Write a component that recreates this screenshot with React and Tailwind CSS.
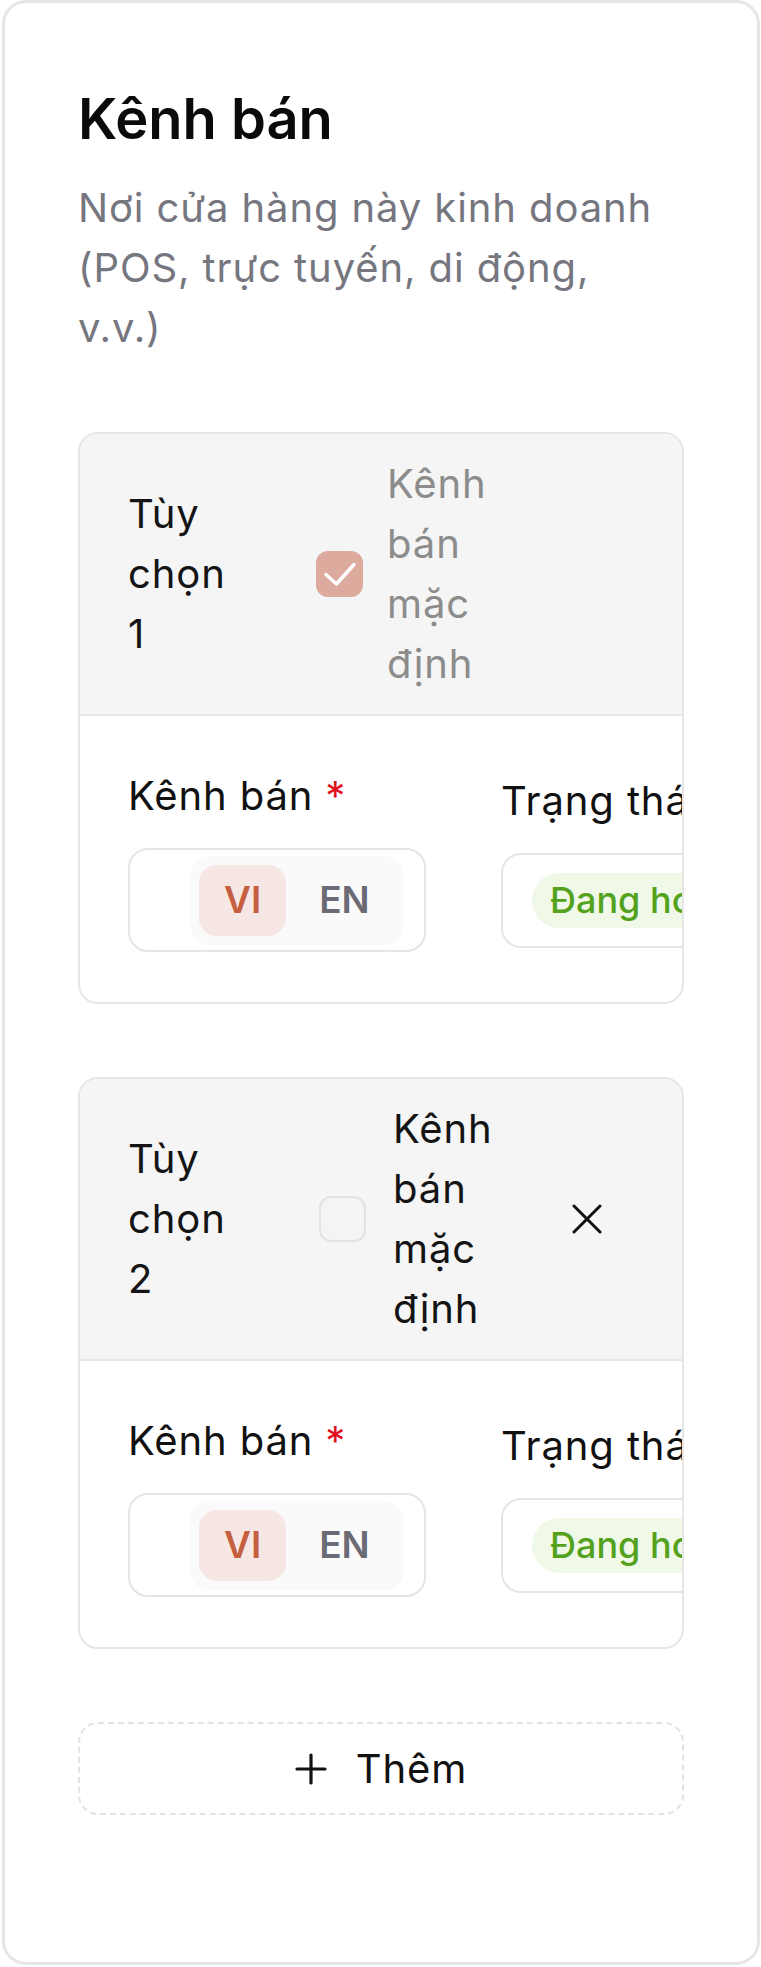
import { useState } from 'react';

const options = [
  { id: 1, isDefault: true, colW: 'w-[188px]', labelGap: 'ml-[24px]', removable: false },
  { id: 2, isDefault: false, colW: 'w-[191px]', labelGap: 'ml-[27px]', removable: true },
];

function CheckIcon() {
  return (
    <svg width="47" height="46" viewBox="0 0 47 46" fill="none">
      <path d="M10 23.5 20.5 33 38 13.5" stroke="white" strokeWidth="3.5" strokeLinecap="round" strokeLinejoin="round" />
    </svg>
  );
}

function CloseIcon() {
  return (
    <svg width="30" height="30" viewBox="0 0 30 30" fill="none">
      <path d="M2 2 28 28M28 2 2 28" stroke="#111" strokeWidth="3" strokeLinecap="round" />
    </svg>
  );
}

function PlusIcon() {
  return (
    <svg width="32" height="32" viewBox="0 0 32 32" fill="none">
      <path d="M16 2v28M2 16h28" stroke="#111" strokeWidth="3.2" strokeLinecap="round" />
    </svg>
  );
}

function OptionCard({ opt }) {
  const [lang, setLang] = useState('VI');

  return (
    <div className="overflow-hidden rounded-[20px] border-2 border-[#e6e6e6] bg-white">
      <div className="flex items-center border-b-2 border-[#e6e6e6] bg-[#f5f5f5] py-[20px] pl-[48px] text-[40px] leading-[60px] tracking-[0.9px]">
        <div className={`${opt.colW} shrink-0`}>
          <p className="w-[112px] text-[#141414]">Tùy chọn {opt.id}</p>
        </div>
        {opt.isDefault ? (
          <div className="flex h-[46px] w-[47px] shrink-0 items-center justify-center rounded-[12px] bg-[#ddaa9e]">
            <CheckIcon />
          </div>
        ) : (
          <div className="h-[46px] w-[47px] shrink-0 rounded-[12px] border-2 border-[#e2e2e2] bg-[#f4f4f4]" />
        )}
        <p className={`${opt.labelGap} w-[118px] shrink-0 ${opt.isDefault ? 'text-[#8c8c8c]' : 'text-[#141414]'}`}>
          Kênh bán mặc định
        </p>
        {opt.removable && (
          <button className="ml-[61px] flex h-[30px] w-[30px] shrink-0 items-center justify-center" aria-label="Xóa">
            <CloseIcon />
          </button>
        )}
      </div>

      <div className="flex items-center gap-[75px] px-[48px] py-[50px]">
        <div className="w-[298px] shrink-0">
          <p className="text-[40px] leading-[60px] tracking-[0.9px] text-[#111]">
            Kênh bán<span className="ml-[12px] text-[#e0101f]">*</span>
          </p>
          <div className="mt-[22px] flex h-[104px] items-center rounded-[20px] border-2 border-[#e5e5e5] pl-[60px]">
            <div className="flex h-[89px] gap-[8px] rounded-[20px] bg-[#fafafa] p-[9px]">
              {['VI', 'EN'].map((l) => (
                <button
                  key={l}
                  onClick={() => setLang(l)}
                  className={`flex items-center rounded-[18px] px-[25px] text-[37px] font-semibold ${
                    lang === l ? 'bg-[#f6e7e5] text-[#c65f3f]' : 'text-[#6b6b76]'
                  }`}
                >
                  {l}
                </button>
              ))}
            </div>
          </div>
        </div>

        <div className="w-[298px] shrink-0">
          <p className="whitespace-nowrap text-[40px] leading-[60px] tracking-[0.9px] text-[#111]">Trạng thái</p>
          <div className="mt-[22px] flex h-[95px] items-center rounded-[20px] border-2 border-[#e5e5e5] pl-[29px]">
            <span className="flex h-[55px] shrink-0 items-center whitespace-nowrap rounded-full bg-[#f0f8e8] px-[18px] text-[36px] font-medium text-[#53a21d]">
              Đang hoạt động
            </span>
          </div>
        </div>
      </div>
    </div>
  );
}

export default function App() {
  return (
    <div className="bg-white font-[Inter,'Noto_Sans',sans-serif]">
      <div className="ml-[2px] h-[1965px] w-[758px] rounded-[24px] border-[3px] border-[#e6e6e6] bg-white px-[73px] pt-[81px]">
        <h2 className="text-[56px] font-semibold leading-[70px] text-[#0a0a0a]">Kênh bán</h2>
        <p className="mt-[24px] max-w-[595px] text-[40px] leading-[60px] tracking-[0.9px] text-[#76767f]">
          Nơi cửa hàng này kinh doanh (POS, trực tuyến, di động, v.v.)
        </p>

        <div className="mt-[74px] flex flex-col gap-[73px]">
          {options.map((opt) => (
            <OptionCard key={opt.id} opt={opt} />
          ))}
          <button className="flex h-[93px] items-center justify-center gap-[29px] rounded-[20px] border-2 border-dashed border-[#e3e3e3] text-[40px] tracking-[0.9px] text-[#111]">
            <PlusIcon />
            Thêm
          </button>
        </div>
      </div>
    </div>
  );
}
